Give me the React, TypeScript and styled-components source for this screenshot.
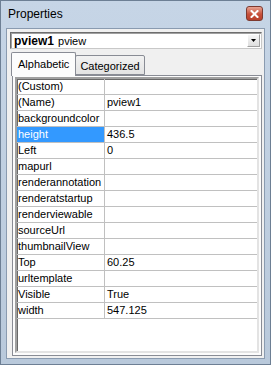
import React from "react";
import styled, { createGlobalStyle } from "styled-components";

const GlobalStyle = createGlobalStyle`
  html, body {
    margin: 0;
    padding: 0;
    background: #ffffff;
  }

  body {
    font-family: "Liberation Sans", Arial, sans-serif;
  }
`;

const Window = styled.div`
  box-sizing: border-box;
  display: flex;
  flex-direction: column;

  width: 271px;
  height: 365px;

  padding: 0 5px 5px 5px;

  background: linear-gradient(#c6d5e6, #b9c9db);
  border: 1px solid #6d7f94;
`;

const TitleBar = styled.div`
  display: flex;
  align-items: center;
  justify-content: space-between;

  height: 27px;
  padding: 0 2px 0 2px;
`;

const Title = styled.span`
  font-size: 12px;
  color: #000;
  margin-top: -1px;
`;

const CloseButton = styled.div`
  display: flex;
  align-items: center;
  justify-content: center;

  width: 15px;
  height: 13px;
  margin-top: -2px;

  background: linear-gradient(#e8a493, #c7503a 55%, #b8402c);
  border: 1px solid #7d3a30;
  border-radius: 3px;
`;

const Client = styled.div`
  box-sizing: border-box;
  display: flex;
  flex-direction: column;
  flex: 1;

  padding: 3px 2px 2px 3px;

  background: #f0f0f0;
  border: 1px solid #8a9bb0;
`;

const Combo = styled.div`
  box-sizing: border-box;
  display: flex;
  align-items: center;

  height: 17px;
  padding: 0 1px 0 3px;

  background: #fff;
  border: 1px solid #6e6e6e;
  border-right-color: #c8c8c8;
  border-bottom-color: #c8c8c8;
  box-shadow: inset 1px 1px 0 #a0a0a0;
`;

const ComboName = styled.span`
  font-size: 12px;
  font-weight: bold;
  margin-right: 4px;
`;

const ComboType = styled.span`
  font-size: 11px;
  flex: 1;
`;

const DropButton = styled.div`
  box-sizing: border-box;
  display: flex;
  align-items: center;
  justify-content: center;

  width: 13px;
  height: 13px;

  background: linear-gradient(#f6f6f6, #dedede);
  border: 1px solid #a0a0a0;
  border-top-color: #fff;
  border-left-color: #fff;
`;

const TabStrip = styled.div`
  display: flex;
  align-items: flex-end;

  height: 23px;
  margin: 3px 0 0 2px;
  padding-left: 1px;
`;

const Tab = styled.div<{ $active?: boolean }>`
  box-sizing: border-box;
  position: relative;
  z-index: ${(p) => (p.$active ? 2 : 1)};

  height: ${(p) => (p.$active ? "24px" : "20px")};
  margin-bottom: ${(p) => (p.$active ? "-1px" : "0")};
  margin-left: ${(p) => (p.$active ? "-2px" : "-1px")};
  padding: ${(p) => (p.$active ? "5px 6px 0 6px" : "4px 4px 0 4px")};

  font-size: 11px;
  color: #000;

  background: ${(p) => (p.$active ? "#fcfcfc" : "linear-gradient(#f2f2f2, #e3e3e3)")};
  border: 1px solid #898c95;
  border-bottom: ${(p) => (p.$active ? "none" : "1px solid #898c95")};
  border-radius: 2px 2px 0 0;
`;

const TabPanel = styled.div`
  box-sizing: border-box;
  display: flex;
  flex-direction: column;
  flex: 1;

  margin-left: 2px;
  padding: 1px 2px 2px 2px;

  background: #fcfcfc;
  border: 1px solid #898c95;
`;

const Grid = styled.div`
  box-sizing: border-box;
  flex: 1;

  background: #fff;
  border: 2px solid;
  border-color: #a0a0a0 #e3e3e3 #e3e3e3 #a0a0a0;
  box-shadow: inset 1px 1px 0 #696969;
`;

const Row = styled.div`
  box-sizing: border-box;
  display: grid;
  grid-template-columns: 88px 1fr;

  height: 16px;

  font-size: 11px;
  line-height: 15px;
  border-bottom: 1px solid #c0c0c0;
`;

const NameCell = styled.div<{ $selected?: boolean }>`
  padding-left: 1px;
  white-space: nowrap;
  overflow: hidden;

  color: ${(p) => (p.$selected ? "#fff" : "#000")};
  background: ${(p) => (p.$selected ? "#3399ff" : "transparent")};
  border-right: 1px solid #c0c0c0;
`;

const ValueCell = styled.div`
  padding-left: 2px;
  white-space: nowrap;
  color: #000;
`;

const properties: [string, string][] = [
  ["(Custom)", ""],
  ["(Name)", "pview1"],
  ["backgroundcolor", ""],
  ["height", "436.5"],
  ["Left", "0"],
  ["mapurl", ""],
  ["renderannotation", ""],
  ["renderatstartup", ""],
  ["renderviewable", ""],
  ["sourceUrl", ""],
  ["thumbnailView", ""],
  ["Top", "60.25"],
  ["urltemplate", ""],
  ["Visible", "True"],
  ["width", "547.125"],
];

const App: React.FC = () => {
  return (
    <>
      <GlobalStyle />
      <Window>
        <TitleBar>
          <Title>Properties</Title>
          <CloseButton>
            <svg width="9" height="8" viewBox="0 0 9 8">
              <path
                d="M1.5 1 L7.5 7 M7.5 1 L1.5 7"
                stroke="#fff"
                strokeWidth="2"
                strokeLinecap="square"
              />
            </svg>
          </CloseButton>
        </TitleBar>

        <Client>
          <Combo>
            <ComboName>pview1</ComboName>
            <ComboType>pview</ComboType>
            <DropButton>
              <svg width="5" height="3" viewBox="0 0 5 3">
                <path d="M0 0 H5 L2.5 3 Z" fill="#000" />
              </svg>
            </DropButton>
          </Combo>

          <TabStrip>
            <Tab $active>Alphabetic</Tab>
            <Tab>Categorized</Tab>
          </TabStrip>

          <TabPanel>
            <Grid>
              {properties.map(([name, value]) => (
                <Row key={name}>
                  <NameCell $selected={name === "height"}>{name}</NameCell>
                  <ValueCell>{value}</ValueCell>
                </Row>
              ))}
            </Grid>
          </TabPanel>
        </Client>
      </Window>
    </>
  );
};

export default App;
